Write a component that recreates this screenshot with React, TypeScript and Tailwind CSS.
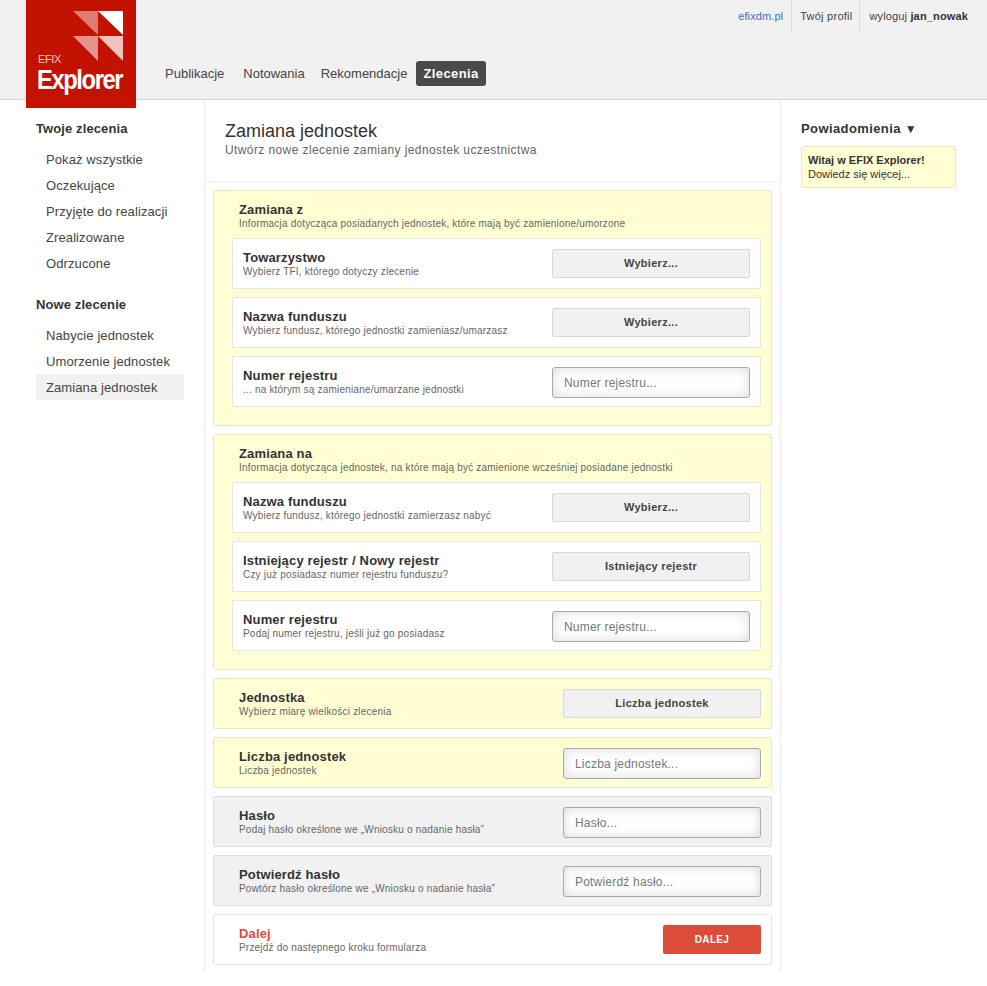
const fontStack = "font-['Liberation_Sans',Arial,sans-serif]";

function ChoiceButton({ label }: { label: string }) {
  return (
    <div className="flex h-[29px] w-[198px] shrink-0 items-center justify-center rounded-[2px] border border-[#d8d8d8] bg-[#f1f1f1] text-[11px] font-bold tracking-[0.3px] text-[#444]">
      {label}
    </div>
  );
}

function FakeInput({ placeholder }: { placeholder: string }) {
  return (
    <div className="mt-[2px] flex h-[31px] w-[198px] shrink-0 items-center rounded-[3px] border border-[#aaa] bg-white pl-[11px] text-[12px] tracking-[0.2px] text-[#777] shadow-[inset_0_0_12px_rgba(0,0,0,0.15)]">
      {placeholder}
    </div>
  );
}

function Heading({ title, hint, accent }: { title: string; hint: string; accent?: boolean }) {
  return (
    <div className="min-w-0">
      <div className={`pt-px text-[13px] leading-[16px] font-bold tracking-[0.15px] ${accent ? "text-[#dd4b39]" : "text-[#333]"}`}>{title}</div>
      <div className="text-[10px] leading-[12px] tracking-[0.2px] text-[#666]">{hint}</div>
    </div>
  );
}

function InnerRow({ title, hint, children }: { title: string; hint: string; children: React.ReactNode }) {
  return (
    <div className="flex h-[51px] items-center justify-between rounded-[2px] border border-[#e6e6e6] bg-white pr-[10px] pl-[10px]">
      <Heading title={title} hint={hint} />
      {children}
    </div>
  );
}

function Group({ title, hint, children }: { title: string; hint: string; children: React.ReactNode }) {
  return (
    <section className="h-[236px] rounded-[2px] border border-[#e9e9bd] bg-[#ffffd3] pt-[10px] pr-[10px] pl-[18px]">
      <div className="pl-[7px]">
        <Heading title={title} hint={hint} />
      </div>
      <div className="mt-[8px] flex flex-col gap-2">{children}</div>
    </section>
  );
}

function OuterRow({
  title,
  hint,
  tone,
  accent,
  children,
}: {
  title: string;
  hint: string;
  tone: "yellow" | "gray" | "white";
  accent?: boolean;
  children: React.ReactNode;
}) {
  const toneClass =
    tone === "yellow"
      ? "border-[#e9e9bd] bg-[#ffffd3]"
      : tone === "gray"
        ? "border-[#dddddd] bg-[#f1f1f1]"
        : "border-[#e6e6e6] bg-white";
  return (
    <div className={`flex h-[51px] items-center justify-between rounded-[2px] border pr-[10px] pl-[25px] ${toneClass}`}>
      <Heading title={title} hint={hint} accent={accent} />
      {children}
    </div>
  );
}

function SideLink({ label, active }: { label: string; active?: boolean }) {
  return (
    <div className={`h-[26px] pl-[10px] text-[13px] leading-[28px] tracking-[0.1px] text-[#444] ${active ? "bg-[#f1f1f1]" : ""}`}>
      {label}
    </div>
  );
}

function Logo() {
  return (
    <div className="absolute top-0 left-[26px] h-[108px] w-[110px] bg-[#c41200]">
      <svg className="absolute top-0 left-0" width="110" height="64" viewBox="0 0 110 64">
        <polygon points="47,11 72,11 72,35" fill="#fff" fillOpacity="0.45" />
        <polygon points="72,11 97,11 97,35" fill="#fff" />
        <polygon points="47,36 72,36 72,61" fill="#fff" fillOpacity="0.55" />
        <polygon points="72,36 97,36 97,61" fill="#fff" fillOpacity="0.75" />
      </svg>
      <div className="absolute top-[53px] left-[12px] text-[11px] leading-[13px] tracking-[-0.4px] text-[#f4c9c4]">EFIX</div>
      <div className="absolute top-[64px] left-[11px] origin-left scale-x-[0.88] text-[27px] leading-[32px] font-bold tracking-[-1.6px] text-white">
        Explorer
      </div>
    </div>
  );
}

export default function App() {
  return (
    <div className={`relative min-h-[986px] bg-white ${fontStack}`}>
      <header className="flex h-[100px] justify-between border-b border-[#d4d4d4] bg-[#f1f1f1] pl-[160px]">
        <nav className="flex items-end self-stretch pb-[13px] text-[13px] text-[#444]">
          <span className="flex h-[25px] items-center px-[5px]">Publikacje</span>
          <span className="ml-[9px] flex h-[25px] items-center px-[5px]">Notowania</span>
          <span className="ml-[6px] flex h-[25px] items-center px-[5px]">Rekomendacje</span>
          <span className="ml-[4px] flex h-[25px] items-center rounded-[3px] bg-[#4a4a4a] px-[7px] font-bold tracking-[0.4px] text-white">Zlecenia</span>
        </nav>
        <div className="flex h-[32px] items-center pr-[19px] text-[11px]">
          <span className="pr-2 tracking-[0.1px] text-[#3b6fc9]">efixdm.pl</span>
          <span className="flex h-full items-center border-l border-[#dcdcdc] pr-[7px] pl-2 tracking-[0.25px] text-[#444]">Twój profil</span>
          <span className="flex h-full items-center border-l border-[#dcdcdc] pl-[9px] tracking-[0.15px] text-[#444]">
            wyloguj&nbsp;<b className="text-[#333]">jan_nowak</b>
          </span>
        </div>
      </header>
      <Logo />

      <div className="flex items-start">
        <aside className="w-[205px] shrink-0 self-stretch border-r border-[#eeeeee] pt-[20px] pr-5 pl-9">
          <h2 className="text-[13px] leading-[18px] font-bold tracking-[0.1px] text-[#333]">Twoje zlecenia</h2>
          <div className="mt-[8px]">
            <SideLink label="Pokaż wszystkie" />
            <SideLink label="Oczekujące" />
            <SideLink label="Przyjęte do realizacji" />
            <SideLink label="Zrealizowane" />
            <SideLink label="Odrzucone" />
          </div>
          <h2 className="mt-[20px] text-[13px] leading-[18px] font-bold tracking-[0.1px] text-[#333]">Nowe zlecenie</h2>
          <div className="mt-[8px]">
            <SideLink label="Nabycie jednostek" />
            <SideLink label="Umorzenie jednostek" />
            <SideLink label="Zamiana jednostek" active />
          </div>
        </aside>

        <main className="w-[576px] shrink-0 border-r border-[#eeeeee] pb-2">
          <div className="h-[82px] border-b border-[#eeeeee] pt-[21px] pl-5">
            <h1 className="text-[18px] leading-[20px] text-[#333]">Zamiana jednostek</h1>
            <p className="mt-px text-[12px] leading-[17px] tracking-[0.4px] text-[#666]">Utwórz nowe zlecenie zamiany jednostek uczestnictwa</p>
          </div>
          <div className="flex flex-col gap-2 pt-2 pr-2 pl-2">
            <Group title="Zamiana z" hint="Informacja dotycząca posiadanych jednostek, które mają być zamienione/umorzone">
              <InnerRow title="Towarzystwo" hint="Wybierz TFI, którego dotyczy zlecenie">
                <ChoiceButton label="Wybierz..." />
              </InnerRow>
              <InnerRow title="Nazwa funduszu" hint="Wybierz fundusz, którego jednostki zamieniasz/umarzasz">
                <ChoiceButton label="Wybierz..." />
              </InnerRow>
              <InnerRow title="Numer rejestru" hint="... na którym są zamieniane/umarzane jednostki">
                <FakeInput placeholder="Numer rejestru..." />
              </InnerRow>
            </Group>
            <Group title="Zamiana na" hint="Informacja dotycząca jednostek, na które mają być zamienione wcześniej posiadane jednostki">
              <InnerRow title="Nazwa funduszu" hint="Wybierz fundusz, którego jednostki zamierzasz nabyć">
                <ChoiceButton label="Wybierz..." />
              </InnerRow>
              <InnerRow title="Istniejący rejestr / Nowy rejestr" hint="Czy już posiadasz numer rejestru funduszu?">
                <ChoiceButton label="Istniejący rejestr" />
              </InnerRow>
              <InnerRow title="Numer rejestru" hint="Podaj numer rejestru, jeśli już go posiadasz">
                <FakeInput placeholder="Numer rejestru..." />
              </InnerRow>
            </Group>
            <OuterRow title="Jednostka" hint="Wybierz miarę wielkości zlecenia" tone="yellow">
              <ChoiceButton label="Liczba jednostek" />
            </OuterRow>
            <OuterRow title="Liczba jednostek" hint="Liczba jednostek" tone="yellow">
              <FakeInput placeholder="Liczba jednostek..." />
            </OuterRow>
            <OuterRow title="Hasło" hint="Podaj hasło określone we „Wniosku o nadanie hasła”" tone="gray">
              <FakeInput placeholder="Hasło..." />
            </OuterRow>
            <OuterRow title="Potwierdź hasło" hint="Powtórz hasło określone we „Wniosku o nadanie hasła”" tone="gray">
              <FakeInput placeholder="Potwierdź hasło..." />
            </OuterRow>
            <OuterRow title="Dalej" hint="Przejdź do następnego kroku formularza" tone="white" accent>
              <div className="flex h-[29px] w-[98px] items-center justify-center rounded-[2px] bg-[#dd4b39] text-[10px] font-bold tracking-[0.3px] text-white">
                DALEJ
              </div>
            </OuterRow>
          </div>
        </main>

        <aside className="w-[175px] shrink-0 pt-[20px] pl-5">
          <h2 className="text-[13px] leading-[18px] font-bold tracking-[0.4px] text-[#333]">
            Powiadomienia <span className="text-[12px]">▼</span>
          </h2>
          <div className="mt-[8px] h-[42px] rounded-[2px] border border-[#e9e9bd] bg-[#ffffd3] pt-[6px] pl-[6px] text-[11px] leading-[14px] text-[#333]">
            <b>Witaj w EFIX Explorer!</b>
            <div>Dowiedz się więcej...</div>
          </div>
        </aside>
      </div>
    </div>
  );
}
